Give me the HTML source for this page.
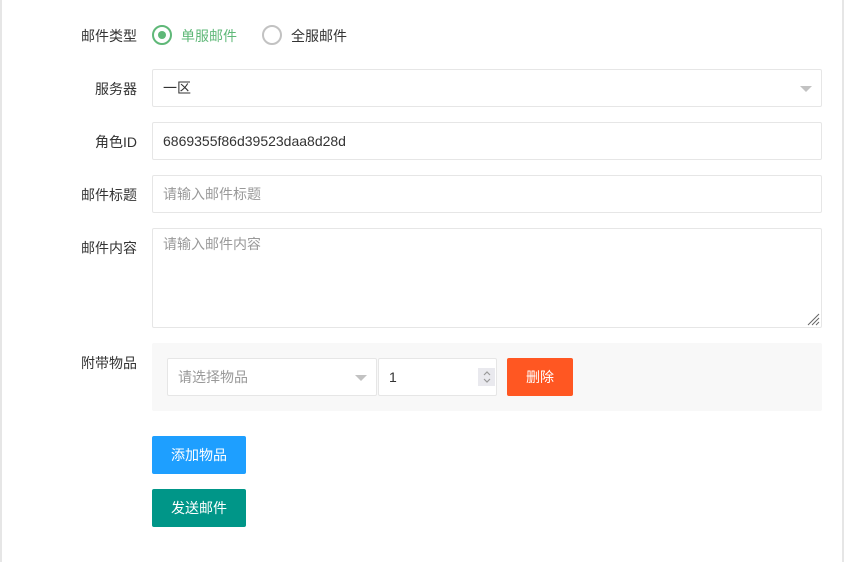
<!DOCTYPE html><html><head><meta charset="utf-8"><style>
*{box-sizing:border-box;margin:0;padding:0}
body{width:844px;height:562px;background:#fff;font-family:"Liberation Sans","Noto Sans CJK SC",sans-serif;font-size:14px;color:#333;position:relative;overflow:hidden}
.edge{position:absolute;top:0;bottom:0;width:2px;background:#e6e6e6}
.a{position:absolute}
.lbl{position:absolute;right:707px;text-align:right;white-space:nowrap}
.inp{position:absolute;left:152px;width:670px;height:38px;border:1px solid #e6e6e6;border-radius:2px;padding-left:10px;line-height:36px;background:#fff}
.ph{color:#999}
.btn{position:absolute;color:#fff;text-align:center;line-height:38px;height:38px;border-radius:2px}
.tri{position:absolute;width:0;height:0;border-left:6px solid transparent;border-right:6px solid transparent;border-top:6px solid #c2c2c2}
</style></head><body>
<div class="edge" style="left:0"></div><div class="edge" style="right:0"></div>
<div class="lbl" style="top:26px">邮件类型</div>
<div class="a" style="left:152px;top:25px;width:20px;height:20px;border:2px solid #5fb878;border-radius:50%"></div>
<div class="a" style="left:158px;top:31px;width:8px;height:8px;background:#5fb878;border-radius:50%"></div>
<div class="a" style="left:181px;top:26px;color:#5fb878">单服邮件</div>
<div class="a" style="left:262px;top:25px;width:20px;height:20px;border:2px solid #c2c2c2;border-radius:50%"></div>
<div class="a" style="left:291px;top:26px">全服邮件</div>

<div class="lbl" style="top:79px">服务器</div>
<div class="inp" style="top:69px">一区</div>
<div class="tri" style="left:800px;top:86px"></div>

<div class="lbl" style="top:132px">角色ID</div>
<div class="inp" style="top:122px">6869355f86d39523daa8d28d</div>

<div class="lbl" style="top:185px">邮件标题</div>
<div class="inp ph" style="top:175px">请输入邮件标题</div>

<div class="lbl" style="top:238px">邮件内容</div>
<div class="inp ph" style="top:228px;height:100px;line-height:30px">请输入邮件内容</div>
<svg class="a" style="left:806px;top:312px" width="14" height="14"><path d="M2 13L13 2M6 13L13 6M10 13L13 10" stroke="#666" stroke-width="1"/></svg>

<div class="lbl" style="top:353px">附带物品</div>
<div class="a" style="left:152px;top:343px;width:670px;height:68px;background:#f8f8f8;border-radius:2px"></div>
<div class="inp ph" style="left:167px;top:358px;width:210px">请选择物品</div>
<div class="tri" style="left:355px;top:375px"></div>
<div class="inp" style="left:378px;top:358px;width:119px">1</div>
<div class="a" style="left:478px;top:368px;width:17px;height:18px;background:#e9e9ee"></div>
<svg class="a" style="left:481px;top:369px" width="12" height="16"><path d="M3 6L6 3L9 6M3 10L6 13L9 10" stroke="#999" fill="none" stroke-width="1.2"/></svg>
<div class="btn" style="left:507px;top:358px;width:66px;background:#ff5722">删除</div>

<div class="btn" style="left:152px;top:436px;width:94px;background:#1e9fff">添加物品</div>
<div class="btn" style="left:152px;top:489px;width:94px;background:#009688">发送邮件</div>
</body></html>
